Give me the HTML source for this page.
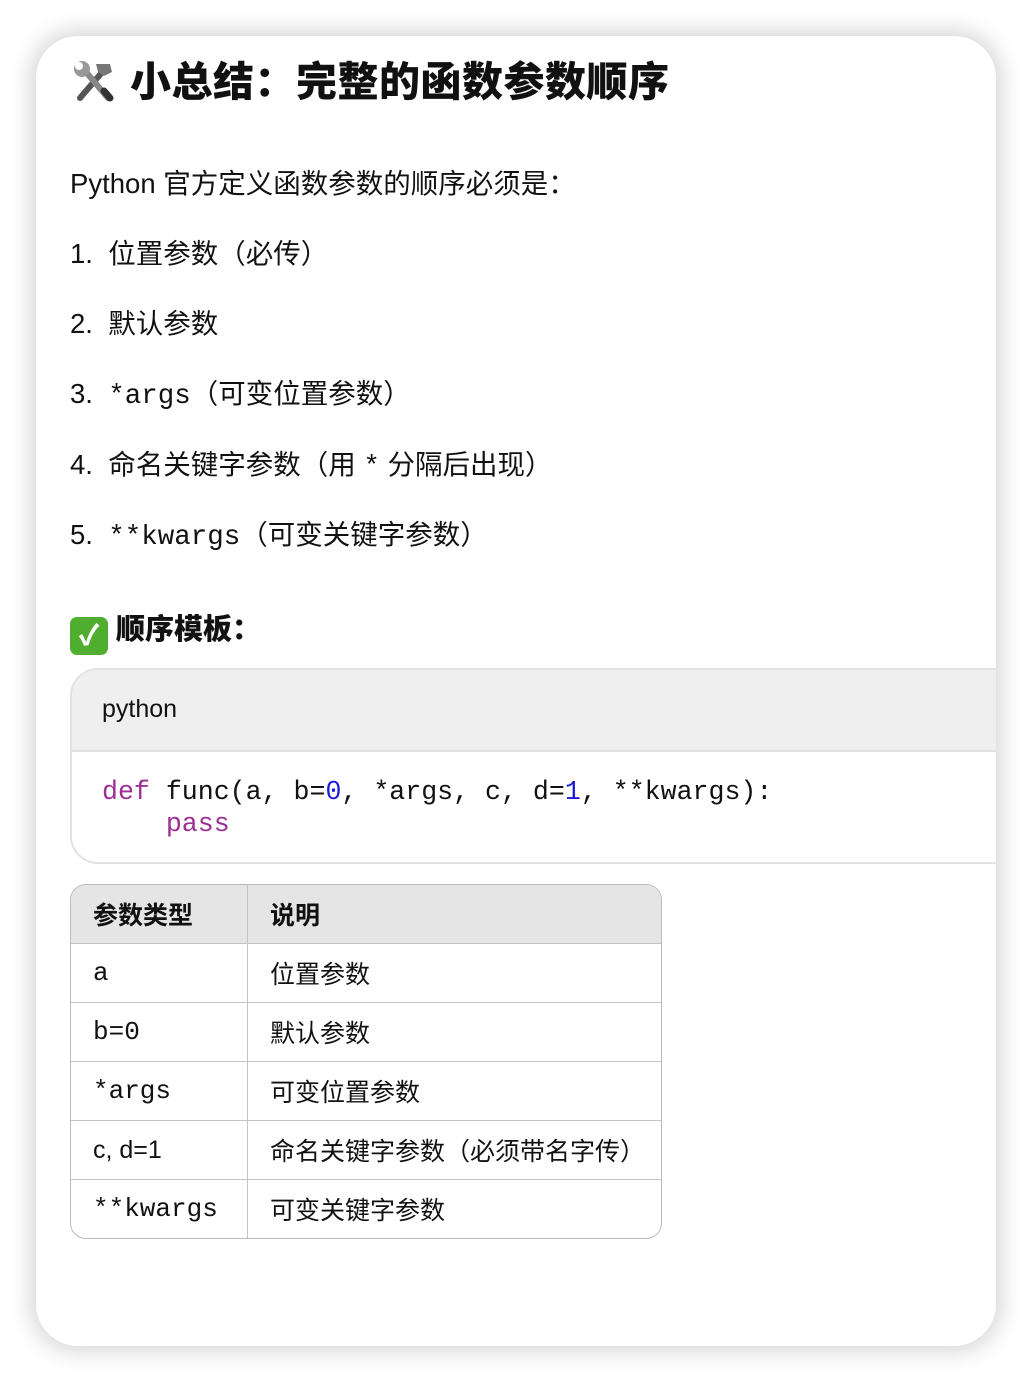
<!DOCTYPE html>
<html><head><meta charset="utf-8"><style>
html,body{margin:0;padding:0;width:1032px;height:1382px;background:#fff;overflow:hidden}
body{font-family:"Liberation Sans","Noto Sans CJK SC",sans-serif;color:#111;}
.card{position:absolute;left:36px;top:36px;width:960px;height:1310px;border-radius:42px;background:#fff;box-shadow:0 0 22px 6px rgba(0,0,0,0.16);overflow:hidden}
.t{position:absolute;white-space:nowrap}
.mono{font-family:"Liberation Mono","Noto Sans CJK SC",monospace}
h1{position:absolute;left:94px;top:12px;margin:0;font-size:41px;font-weight:900;letter-spacing:0.5px;white-space:nowrap}
.p{font-size:27.5px;left:34px}
.code{position:absolute;left:34px;top:632px;width:1000px;height:192px;border:2px solid #e2e2e2;border-radius:28px;background:#fff;overflow:hidden}
.code .hd{height:80px;background:#efefef;border-bottom:2px solid #e2e2e2;font-size:25px;line-height:78px;padding-left:30px}
.code pre{margin:0;padding:24px 0 0 30px;font-family:"Liberation Mono",monospace;font-size:26.6px;line-height:32px;color:#111}
.kw{color:#9b2f95}.num{color:#1a1ad8}
table{position:absolute;left:34px;top:848px;width:592px;border-collapse:separate;border-spacing:0;border:1.5px solid #bbb;border-radius:16px;overflow:hidden;font-size:25px}
td,th{height:58px;padding:0 0 0 22px;text-align:left;border-bottom:1.5px solid #c4c4c4;border-right:1.5px solid #c4c4c4;vertical-align:middle}
th{background:#e5e5e5;font-weight:bold;height:58px}
tr td:last-child,tr th:last-child{border-right:none}
tr:last-child td{border-bottom:none}
td.m{font-family:"Liberation Mono",monospace;font-size:26px}
</style></head><body>
<div class="card">
<svg style="position:absolute;left:34px;top:22px" width="48" height="48" viewBox="0 0 48 48">
<path d="M10 40 L34 12" stroke="#555" stroke-width="6" stroke-linecap="round"/>
<path d="M26 6 L40 6 L42 14 L34 18 L28 14 Z" fill="#777"/>
<path d="M38 40 L16 14" stroke="#888" stroke-width="6" stroke-linecap="round"/>
<circle cx="12" cy="11" r="8" fill="#999"/><circle cx="9" cy="8" r="4" fill="#fff"/>
<path d="M40 40 L34 33" stroke="#333" stroke-width="7" stroke-linecap="round"/>
</svg>
<h1>小总结：完整的函数参数顺序</h1>
<div class="t p" style="top:125px">Python 官方定义函数参数的顺序必须是：</div>
<div class="t p" style="top:195px">1.&nbsp; 位置参数（必传）</div>
<div class="t p" style="top:265px">2.&nbsp; 默认参数</div>
<div class="t p" style="top:335px">3.&nbsp; <span class="mono">*args</span>（可变位置参数）</div>
<div class="t p" style="top:406px">4.&nbsp; 命名关键字参数（用 <span class="mono">*</span> 分隔后出现）</div>
<div class="t p" style="top:476px">5.&nbsp; <span class="mono">**kwargs</span>（可变关键字参数）</div>
<div class="t" style="left:34px;top:570px;font-size:29px;font-weight:900"><span style="display:inline-block;width:38px;height:38px;background:#4fae2f;border-radius:7px;color:#fff;text-align:center;line-height:38px;font-size:28px;vertical-align:-6px;margin-right:8px">✓</span>顺序模板：</div>
<div class="code"><div class="hd">python</div>
<pre><span class="kw">def</span> func(a, b=<span class="num">0</span>, *args, c, d=<span class="num">1</span>, **kwargs):
    <span class="kw">pass</span></pre></div>
<table>
<tr><th style="width:154px">参数类型</th><th>说明</th></tr>
<tr><td class="m">a</td><td>位置参数</td></tr>
<tr><td class="m">b=0</td><td>默认参数</td></tr>
<tr><td class="m">*args</td><td>可变位置参数</td></tr>
<tr><td>c, d=1</td><td>命名关键字参数（必须带名字传）</td></tr>
<tr><td class="m">**kwargs</td><td>可变关键字参数</td></tr>
</table>
</div>
</body></html>
